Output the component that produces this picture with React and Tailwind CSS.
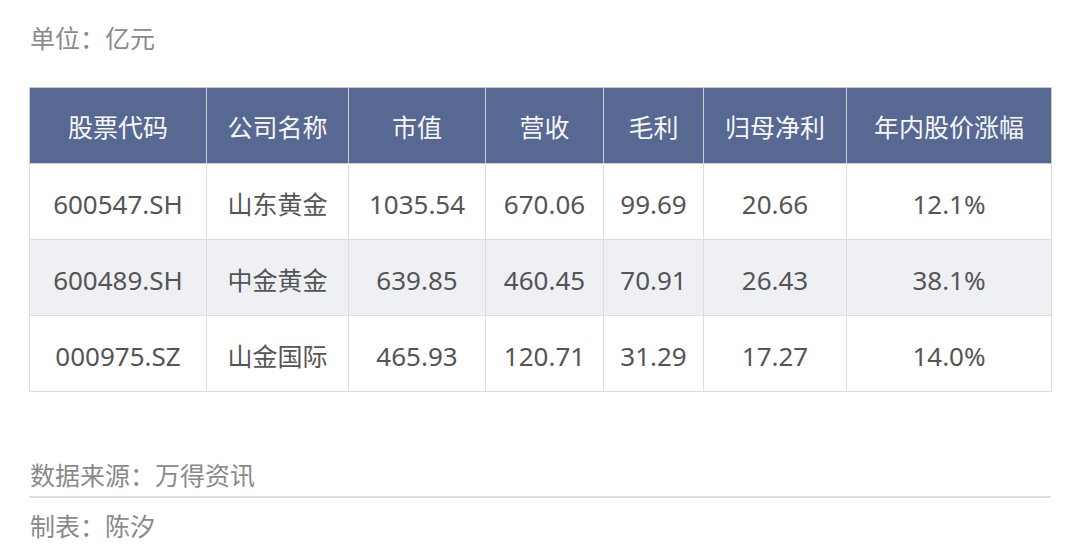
const font = { fontFamily: '"Noto Sans", "Noto Sans CJK SC", sans-serif' };

const cols = [
  { label: '股票代码', w: 'w-[177px]' },
  { label: '公司名称', w: 'w-[142px]' },
  { label: '市值', w: 'w-[137px]' },
  { label: '营收', w: 'w-[118px]' },
  { label: '毛利', w: 'w-[100px]' },
  { label: '归母净利', w: 'w-[143px]' },
  { label: '年内股价涨幅', w: 'w-[205px]' },
];

const rows = [
  ['600547.SH', '山东黄金', '1035.54', '670.06', '99.69', '20.66', '12.1%'],
  ['600489.SH', '中金黄金', '639.85', '460.45', '70.91', '26.43', '38.1%'],
  ['000975.SZ', '山金国际', '465.93', '120.71', '31.29', '17.27', '14.0%'],
];

export default function App() {
  return (
    <div className="w-[1080px] h-[558px] bg-white overflow-hidden" style={font}>
      <div className="pl-[30px] pt-[22px] h-[87px] text-[25px] leading-[32px] text-[#8a8a8a]">单位：亿元</div>
      <table className="ml-[29px] w-[1022px] border-collapse table-fixed">
        <thead>
          <tr className="bg-[#576892]">
            {cols.map(c => (
              <th key={c.label} className={`${c.w} h-[76px] pt-[5px] border border-[#c9ccd3] text-[#f6f7fa] text-[25px] font-normal text-center`}>
                {c.label}
              </th>
            ))}
          </tr>
        </thead>
        <tbody>
          {rows.map((r, i) => (
            <tr key={r[0]} className={i === 1 ? 'bg-[#eff0f4]' : 'bg-white'}>
              {r.map((v, j) => (
                <td key={j} className={`h-[76px] pt-[6px] border border-[#dcdde0] ${j === 1 ? 'text-[25px]' : 'text-[26px]'} text-[#555] text-center`}>
                  {v}
                </td>
              ))}
            </tr>
          ))}
        </tbody>
      </table>
      <div className="mx-[29px] mt-[67px]">
        <div className="pl-[1px] pb-[5px] text-[25px] leading-[32px] text-[#8a8a8a] border-b-2 border-[#dedede]">数据来源：万得资讯</div>
        <div className="pl-[1px] pt-[12px] text-[25px] leading-[32px] text-[#8a8a8a]">制表：陈汐</div>
      </div>
    </div>
  );
}
